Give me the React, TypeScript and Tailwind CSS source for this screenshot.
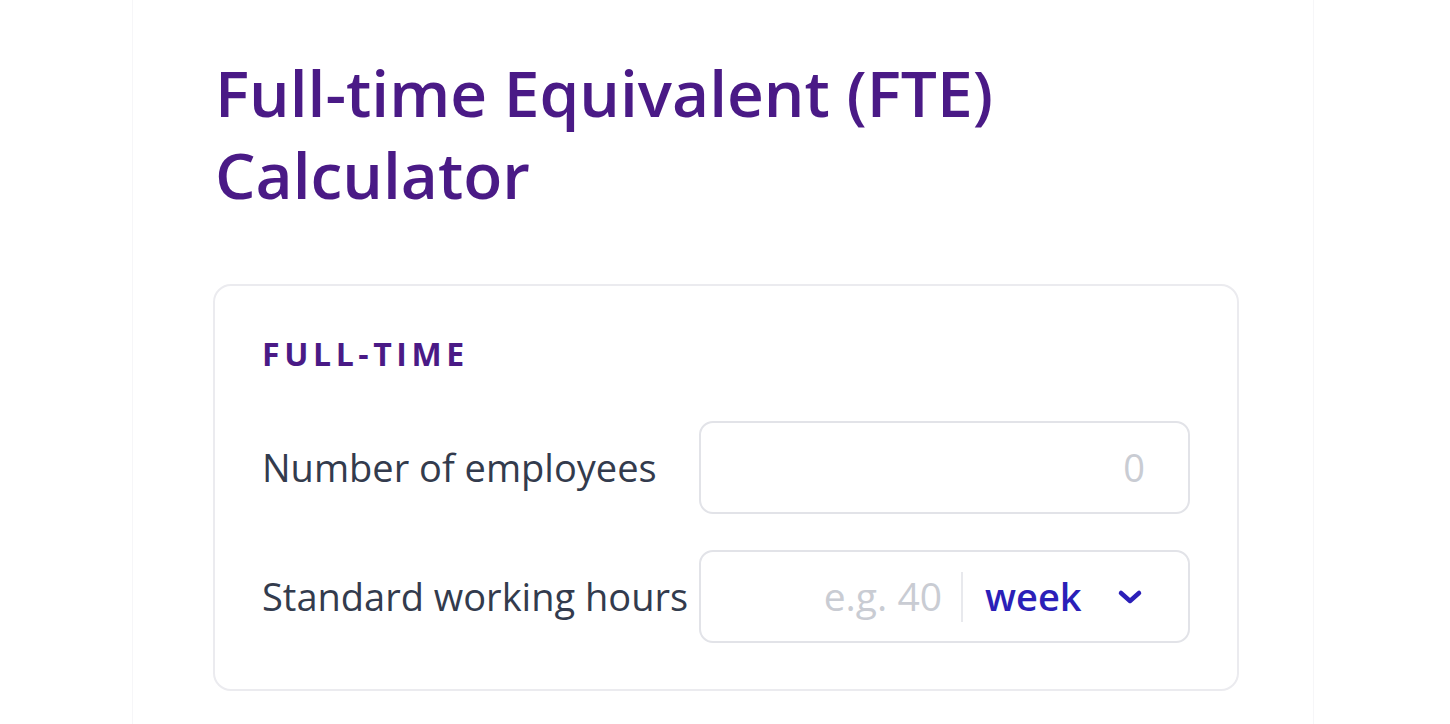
export default function App() {
  return (
    <div className="min-h-[724px] w-full bg-white" style={{ fontFamily: '"Open Sans", "Noto Sans", sans-serif' }}>
      <div className="ml-[132px] min-h-[724px] w-[1182px] border-x border-[#f6f6f8] pl-[80px] pr-[74px] pt-[52px]">
        {/* Heading */}
        <h1 className="pl-[2px] text-[64px] font-semibold leading-[82px] text-[#4a1a86]">
          Full-time Equivalent (FTE)
          <br />
          Calculator
        </h1>

        {/* Full-time card */}
        <div className="mt-[68px] rounded-[18px] border-2 border-[#ebebef] px-[47px] pb-[46px] pt-[44px]">
          <h2 className="text-[32px] font-bold uppercase leading-[48px] tracking-[4.6px] text-[#4a1a86]">Full-time</h2>

          <div className="mt-[43px] flex flex-col gap-[36px]">
            <div className="flex items-center">
              <span className="w-[437px] shrink-0 text-[38px] text-[#333b4d]">Number of employees</span>
              <div className="flex h-[93px] flex-1 items-center justify-end rounded-[14px] border-2 border-[#e2e3e8] px-[43px]">
                <span className="text-[38px] text-[#c9ccd3]">0</span>
              </div>
            </div>

            <div className="flex items-center">
              <span className="w-[437px] shrink-0 whitespace-nowrap text-[38px] text-[#333b4d]">Standard working hours</span>
              <div className="flex h-[93px] flex-1 items-center rounded-[14px] border-2 border-[#e2e3e8]">
                <span className="flex-1 pr-[19px] text-right text-[39px] text-[#c9ccd3]">e.g. 40</span>
                <div className="h-[50px] w-[2px] bg-[#e8e9ed]" />
                <div className="flex w-[225px] items-center justify-between pl-[22px] pr-[45px]">
                  <span className="text-[38px] font-semibold text-[#2b1fb8]">week</span>
                  <svg width="26" height="16" viewBox="0 0 26 16" fill="none">
                    <path d="M4 4 L13 12 L22 4" stroke="#2b1fb8" strokeWidth="4.5" strokeLinecap="round" strokeLinejoin="round" />
                  </svg>
                </div>
              </div>
            </div>
          </div>
        </div>
      </div>
    </div>
  );
}
